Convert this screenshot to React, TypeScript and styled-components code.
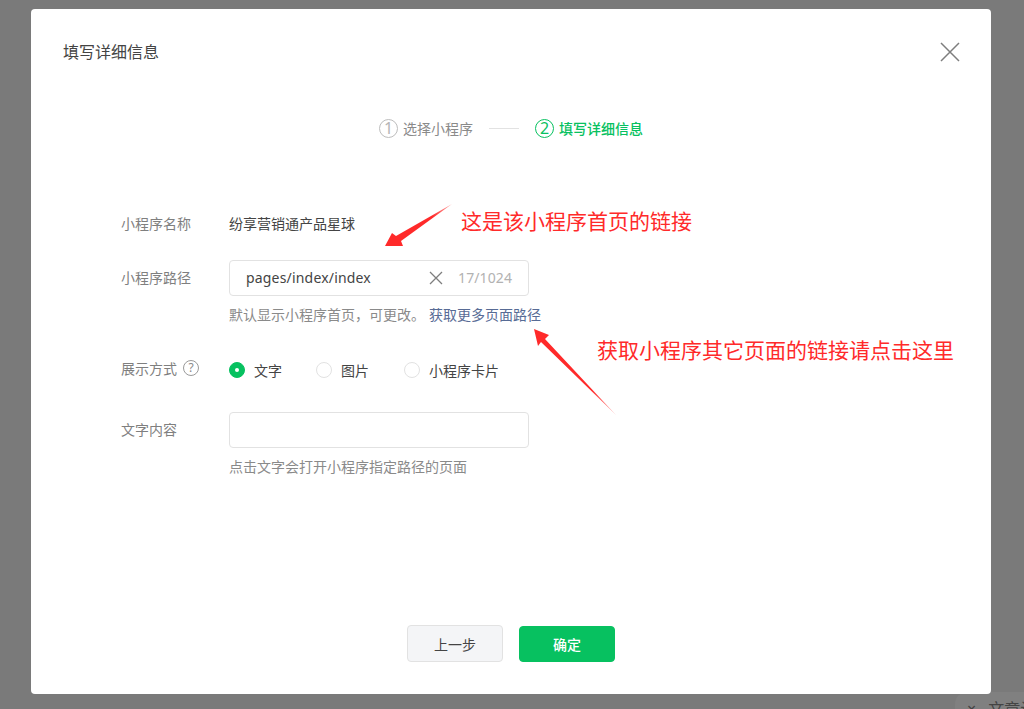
import React from "react";
import styled, { createGlobalStyle } from "styled-components";

const FONT = `"Noto Sans", "Noto Sans CJK SC", sans-serif`;

const Global = createGlobalStyle`
  html, body { margin: 0; padding: 0; height: 100%; background: #7a7a7a; overflow: hidden; font-family: ${FONT}; }
  * { box-sizing: border-box; }
`;

const Page = styled.div`
  position: relative;
  width: 1024px;
  height: 709px;
  background: #7a7a7a;
  overflow: hidden;
  padding: 9px 33px 15px 31px;
`;

const Behind = styled.div`
  position: absolute;
  left: 955px;
  top: 692px;
  width: 90px;
  height: 40px;
  border-radius: 12px 0 0 0;
  background: #808080;
  color: #444;
  font-size: 16px;
  line-height: 24px;
  padding: 5px 0 0 12px;
  word-spacing: 8px;
  white-space: nowrap;
`;

const Modal = styled.div`
  position: relative;
  height: 685px;
  background: #fff;
  border-radius: 4px;
  display: flex;
  flex-direction: column;
`;

const Header = styled.header`
  display: flex;
  justify-content: space-between;
  align-items: center;
  height: 86px;
  padding: 0 31px 0 32px;
`;

const Title = styled.h2`
  margin: -2px 0 0;
  font-size: 16px;
  font-weight: 400;
  color: #444;
`;

const CloseIcon = styled.svg`
  width: 20px;
  height: 20px;
  stroke: #7e7e7e;
  stroke-width: 1.5;
  fill: none;
`;

const Steps = styled.div`
  display: flex;
  justify-content: center;
  align-items: center;
  height: 20px;
  margin: 23px 0 0;
`;

const Step = styled.div<{ $active?: boolean }>`
  display: flex;
  align-items: center;
  gap: 5px;
  font-size: 14px;
  font-weight: ${(p) => (p.$active ? 500 : 400)};
  color: ${(p) => (p.$active ? "#07c160" : "#8a8a8a")};
`;

const StepNumber = styled.span<{ $active?: boolean }>`
  width: 19px;
  height: 19px;
  border: 1.3px solid ${(p) => (p.$active ? "#07c160" : "#bdbdbd")};
  border-radius: 50%;
  display: flex;
  align-items: center;
  justify-content: center;
  font-size: 16px;
  font-weight: 400;
  line-height: 1;
  color: ${(p) => (p.$active ? "#07c160" : "#b5b5b5")};
`;

const StepLine = styled.span`
  width: 30px;
  height: 1px;
  background: #e2e2e2;
  margin: 0 16px;
`;

const Form = styled.form`
  display: flex;
  flex-direction: column;
  padding: 74px 0 0 90px;
  flex: 1;
`;

const Row = styled.div<{ $top?: number }>`
  display: grid;
  grid-template-columns: 108px 1fr;
  margin-top: ${(p) => p.$top ?? 0}px;
`;

const Label = styled.label<{ $height: number }>`
  display: flex;
  align-items: center;
  gap: 6px;
  height: ${(p) => p.$height}px;
  padding-bottom: 2px;
  font-size: 14px;
  color: #7f7f7f;
`;

const Value = styled.div`
  height: 24px;
  line-height: 24px;
  font-size: 14px;
  color: #444;
`;

const Field = styled.div`
  display: flex;
  align-items: center;
  width: 300px;
  height: 36px;
  border: 1px solid #e2e2e2;
  border-radius: 4px;
  padding: 0 16px;
  background: #fff;
`;

const FieldText = styled.span`
  flex: 1;
  margin-top: -2px;
  font-size: 14px;
  letter-spacing: 0.18px;
  color: #444;
`;

const ClearIcon = styled.svg`
  width: 14px;
  height: 14px;
  stroke: #7e7e7e;
  stroke-width: 1.3;
  fill: none;
  margin-right: 15px;
`;

const Count = styled.span`
  margin-top: -2px;
  font-size: 14px;
  letter-spacing: 0.1px;
  color: #b2b2b2;
`;

const Tip = styled.p`
  margin: 8px 0 0;
  height: 22px;
  line-height: 22px;
  font-size: 14px;
  color: #8a8a8a;
  white-space: nowrap;
`;

const TipLink = styled.a`
  color: #576b95;
  margin-left: 4px;
`;

const HelpIcon = styled.span`
  width: 16px;
  height: 16px;
  border: 1px solid #9a9a9a;
  border-radius: 50%;
  color: #8a8a8a;
  font-size: 12px;
  line-height: 1;
  display: flex;
  align-items: center;
  justify-content: center;
`;

const Radios = styled.div`
  display: flex;
  align-items: center;
  height: 24px;
`;

const RadioItem = styled.span<{ $width: number }>`
  display: flex;
  align-items: center;
  gap: 9px;
  width: ${(p) => p.$width}px;
  font-size: 14px;
  color: #444;
`;

const RadioDot = styled.span<{ $checked?: boolean }>`
  width: 16px;
  height: 16px;
  border-radius: 50%;
  border: 1px solid ${(p) => (p.$checked ? "#07c160" : "#e2e2e2")};
  background: ${(p) => (p.$checked ? "#07c160" : "#fff")};
  display: flex;
  align-items: center;
  justify-content: center;
  &::after {
    content: "";
    width: 4px;
    height: 4px;
    border-radius: 50%;
    background: ${(p) => (p.$checked ? "#fff" : "transparent")};
  }
`;

const Footer = styled.footer`
  display: flex;
  justify-content: center;
  align-items: flex-end;
  gap: 16px;
  padding: 0 0 32px;
`;

const Button = styled.button<{ $primary?: boolean }>`
  width: 96px;
  height: ${(p) => (p.$primary ? 36 : 37)}px;
  border-radius: 4px;
  border: 1px solid ${(p) => (p.$primary ? "#07c160" : "#e2e2e2")};
  background: ${(p) => (p.$primary ? "#07c160" : "#f4f5f7")};
  color: ${(p) => (p.$primary ? "#fff" : "#444")};
  font-family: ${FONT};
  font-size: 14px;
  font-weight: ${(p) => (p.$primary ? 500 : 400)};
  padding: 0;
`;

const Note = styled.div<{ $x: number; $y: number }>`
  position: absolute;
  left: ${(p) => p.$x}px;
  top: ${(p) => p.$y}px;
  font-size: 21px;
  line-height: 28px;
  color: #ff2a2a;
  white-space: nowrap;
`;

const Arrow = styled.svg`
  position: absolute;
  left: 0;
  top: 0;
  width: 1024px;
  height: 709px;
  pointer-events: none;
`;

export default function App() {
  return (
    <Page>
      <Global />
      <Behind>× 文章设置</Behind>
      <Modal>
        <Header>
          <Title>填写详细信息</Title>
          <CloseIcon viewBox="0 0 20 20">
            <path d="M1 1 L19 19 M19 1 L1 19" />
          </CloseIcon>
        </Header>
        <Steps>
          <Step>
            <StepNumber>1</StepNumber>选择小程序
          </Step>
          <StepLine />
          <Step $active>
            <StepNumber $active>2</StepNumber>填写详细信息
          </Step>
        </Steps>
        <Form>
          <Row>
            <Label $height={24}>小程序名称</Label>
            <Value>纷享营销通产品星球</Value>
          </Row>
          <Row $top={24}>
            <Label $height={36}>小程序路径</Label>
            <div>
              <Field>
                <FieldText>pages/index/index</FieldText>
                <ClearIcon viewBox="0 0 14 14">
                  <path d="M1 1 L13 13 M13 1 L1 13" />
                </ClearIcon>
                <Count>17/1024</Count>
              </Field>
              <Tip>
                默认显示小程序首页，可更改。<TipLink>获取更多页面路径</TipLink>
              </Tip>
            </div>
          </Row>
          <Row $top={32}>
            <Label $height={22}>
              展示方式<HelpIcon>?</HelpIcon>
            </Label>
            <Radios>
              <RadioItem $width={87}>
                <RadioDot $checked />
                文字
              </RadioItem>
              <RadioItem $width={88}>
                <RadioDot />
                图片
              </RadioItem>
              <RadioItem $width={110}>
                <RadioDot />
                小程序卡片
              </RadioItem>
            </Radios>
          </Row>
          <Row $top={30}>
            <Label $height={36}>文字内容</Label>
            <div>
              <Field />
              <Tip>点击文字会打开小程序指定路径的页面</Tip>
            </div>
          </Row>
        </Form>
        <Footer>
          <Button type="button">上一步</Button>
          <Button type="button" $primary>
            确定
          </Button>
        </Footer>
      </Modal>
      <Arrow viewBox="0 0 1024 709">
        <defs>
          <linearGradient id="a1" x1="452" y1="204" x2="385" y2="246" gradientUnits="userSpaceOnUse">
            <stop offset="0" stopColor="#ff2a2a" stopOpacity="0.4" />
            <stop offset="0.3" stopColor="#ff2a2a" />
          </linearGradient>
          <linearGradient id="a2" x1="616" y1="415" x2="534" y2="330" gradientUnits="userSpaceOnUse">
            <stop offset="0" stopColor="#ff2a2a" stopOpacity="0.4" />
            <stop offset="0.3" stopColor="#ff2a2a" />
          </linearGradient>
        </defs>
        <path d="M452 204 L401 241 L403 246 L385 246 L392 233 L396 236 Z" fill="url(#a1)" />
        <path d="M616 415 L545 339 L549 335 L534 329 L538 346 L541 342 Z" fill="url(#a2)" />
      </Arrow>
      <Note $x={461} $y={207}>这是该小程序首页的链接</Note>
      <Note $x={597} $y={336}>获取小程序其它页面的链接请点击这里</Note>
    </Page>
  );
}
